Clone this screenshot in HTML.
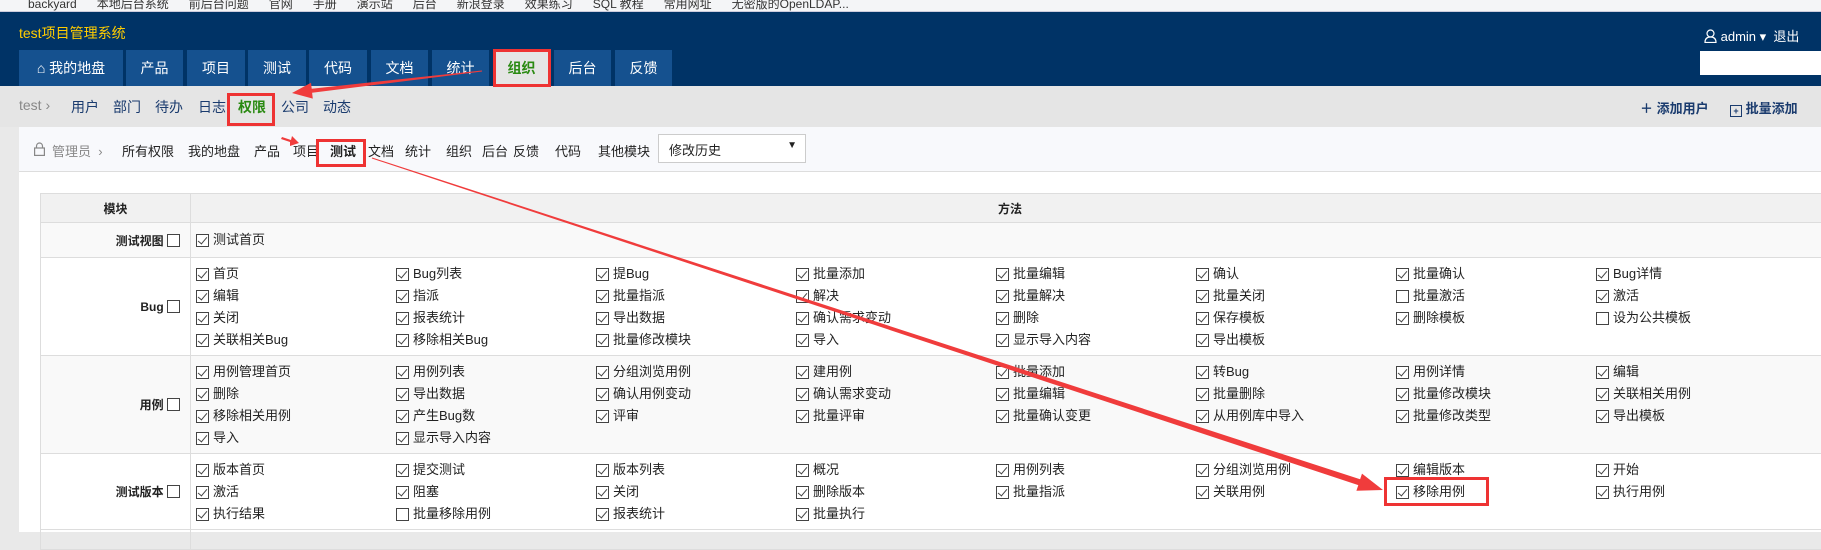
<!DOCTYPE html>
<html><head><meta charset="utf-8"><style>
*{box-sizing:border-box;margin:0;padding:0}
body{width:1821px;height:532px;overflow:hidden;background:#e9e9e9;font-family:"Liberation Sans","Noto Sans CJK SC",sans-serif;font-size:13px;color:#222;position:relative}
.abs{position:absolute;white-space:nowrap}
#bm{position:absolute;left:0;top:0;width:1821px;height:12px;background:#f4f5f7;border-bottom:1px solid #ccd;overflow:hidden}
#hd{position:absolute;left:0;top:12px;width:1821px;height:74px;background:#003366}
.tab{position:absolute;top:38px;height:36px;background:#15518f;color:#fff;font-size:14px;line-height:36px;text-align:center}
#sub{position:absolute;left:0;top:86px;width:1821px;height:41px;background:#e5e5e5}
#panel{position:absolute;left:19px;top:127px;width:1802px;height:405px;background:#fff}
#nav2{position:absolute;left:0;top:0;width:100%;height:45px;background:#f8f9fc;border-bottom:1px solid #ddd}
table{position:absolute;left:21px;top:66px;border-collapse:collapse;width:1790px}
td,th{border:1px solid #ddd;vertical-align:middle}
th{background:#f1f1f1;height:29px;font-size:12px}
td.m{width:150px;text-align:right;font-weight:bold;font-size:12px;padding-right:6px}
td.i{padding:5px 0 4px 5px}
.row{display:flex;flex-wrap:wrap}
.it{width:200px;height:22px;line-height:22px;font-size:13px;display:flex;align-items:center}
.cb{display:inline-block;width:13px;height:13px;border:1px solid #444;margin-right:4px;position:relative;flex:none;background:#fff}
.cb.k::after{content:"";position:absolute;left:3px;top:0px;width:4px;height:8px;border:solid #444;border-width:0 1.5px 1.5px 0;transform:rotate(40deg)}
.g{background:#f9f9f9}
.rb{position:absolute;border:3px solid #ee3333}
</style></head><body>
<div id="bm"><span class="abs" style="left:28px;top:-5px;font-size:12px;color:#333">backyard &nbsp;&nbsp;&nbsp;&nbsp; 本地后台系统 &nbsp;&nbsp;&nbsp;&nbsp; 前后台问题 &nbsp;&nbsp;&nbsp;&nbsp; 官网 &nbsp;&nbsp;&nbsp;&nbsp; 手册 &nbsp;&nbsp;&nbsp;&nbsp; 演示站 &nbsp;&nbsp;&nbsp;&nbsp; 后台 &nbsp;&nbsp;&nbsp;&nbsp; 新浪登录 &nbsp;&nbsp;&nbsp;&nbsp; 效果练习 &nbsp;&nbsp;&nbsp;&nbsp; SQL 教程 &nbsp;&nbsp;&nbsp;&nbsp; 常用网址 &nbsp;&nbsp;&nbsp;&nbsp; 无密版的OpenLDAP...</span></div>
<div id="hd">
<span class="abs" style="left:19px;top:11px;color:#ffcc00;font-size:14px">test项目管理系统</span>
<div class="tab" style="left:19px;width:104px">⌂ 我的地盘</div>
<div class="tab" style="left:126px;width:57px">产品</div>
<div class="tab" style="left:187px;width:58px">项目</div>
<div class="tab" style="left:248px;width:58px">测试</div>
<div class="tab" style="left:309px;width:58px">代码</div>
<div class="tab" style="left:371px;width:57px">文档</div>
<div class="tab" style="left:432px;width:57px">统计</div>
<div class="tab" style="left:493px;width:57px;background:#e5e5e5;color:#2a8a12;font-weight:bold">组织</div>
<div class="tab" style="left:554px;width:57px">后台</div>
<div class="tab" style="left:615px;width:57px">反馈</div>
<span class="abs" style="left:1704px;top:14px;color:#fff;font-size:13px">
<svg width="13" height="14" viewBox="0 0 13 14" style="vertical-align:-2px"><circle cx="6.5" cy="4.5" r="3.5" fill="none" stroke="#fff" stroke-width="1.2"/><path d="M1 13.5 Q1 8 6.5 8 Q12 8 12 13.5 Z" fill="none" stroke="#fff" stroke-width="1.2"/></svg> admin ▾ &nbsp;退出</span>
<div class="abs" style="left:1700px;top:39px;width:121px;height:24px;background:#fff"></div>
</div>
<div id="sub">
<span class="abs" style="left:19px;top:11px;color:#888;font-size:14px">test ›</span>
<span class="abs" style="left:71px;top:11px;color:#1a3b6e;font-size:14px">用户</span>
<span class="abs" style="left:113px;top:11px;color:#1a3b6e;font-size:14px">部门</span>
<span class="abs" style="left:155px;top:11px;color:#1a3b6e;font-size:14px">待办</span>
<span class="abs" style="left:198px;top:11px;color:#1a3b6e;font-size:14px">日志</span>
<span class="abs" style="left:238px;top:11px;color:#2a8a12;font-size:14px;font-weight:bold">权限</span>
<span class="abs" style="left:281px;top:11px;color:#1a3b6e;font-size:14px">公司</span>
<span class="abs" style="left:323px;top:11px;color:#1a3b6e;font-size:14px">动态</span>
<span class="abs" style="left:1640px;top:12px;color:#1a3b6e;font-size:13px;font-weight:bold">＋ 添加用户</span>
<span class="abs" style="left:1730px;top:12px;color:#1a3b6e;font-size:13px;font-weight:bold"><span style="display:inline-block;width:12px;height:12px;border:1px solid #1a3b6e;font-size:9px;line-height:10px;text-align:center;vertical-align:-1px">+</span> 批量添加</span>
</div>
<div id="panel">
<div id="nav2">
<svg class="abs" style="left:15px;top:15px" width="11" height="14" viewBox="0 0 11 14"><path d="M2.5 6 V4 a3 3 0 0 1 6 0 V6" fill="none" stroke="#888" stroke-width="1.2"/><rect x="0.6" y="6" width="9.8" height="7.4" fill="none" stroke="#888" stroke-width="1.2"/></svg>
<span class="abs" style="left:33px;top:14px;color:#888;font-size:13px">管理员 &nbsp;›</span>
<span class="abs" style="left:103px;top:14px;color:#222;font-size:13px">所有权限</span>
<span class="abs" style="left:169px;top:14px;font-size:13px">我的地盘</span>
<span class="abs" style="left:235px;top:14px;font-size:13px">产品</span>
<span class="abs" style="left:274px;top:14px;font-size:13px">项目</span>
<span class="abs" style="left:311px;top:14px;font-size:13px;font-weight:bold">测试</span>
<span class="abs" style="left:349px;top:14px;font-size:13px">文档</span>
<span class="abs" style="left:386px;top:14px;font-size:13px">统计</span>
<span class="abs" style="left:427px;top:14px;font-size:13px">组织</span>
<span class="abs" style="left:463px;top:14px;font-size:13px">后台</span>
<span class="abs" style="left:494px;top:14px;font-size:13px">反馈</span>
<span class="abs" style="left:536px;top:14px;font-size:13px">代码</span>
<span class="abs" style="left:579px;top:14px;font-size:13px">其他模块</span>
<div class="abs" style="left:639px;top:7px;width:148px;height:29px;border:1px solid #ccc;background:#fff;padding:5px 10px;font-size:13px">修改历史<span style="position:absolute;right:8px;top:5px;font-size:10px">▼</span></div>
</div>
<table>
<tr><th style="width:150px">模块</th><th>方法</th></tr>
<tr class="g" style="height:35px"><td class="m">测试视图 <span class="cb" style="vertical-align:-2px"></span></td><td class="i" style="padding:0 0 0 5px"><div class="row"><div class="it"><span class="cb k"></span>测试首页</div></div></td></tr>
<tr style="height:97px"><td class="m">Bug <span class="cb" style="vertical-align:-2px"></span></td><td class="i"><div class="row">
<div class="it"><span class="cb k"></span>首页</div><div class="it"><span class="cb k"></span>Bug列表</div><div class="it"><span class="cb k"></span>提Bug</div><div class="it"><span class="cb k"></span>批量添加</div><div class="it"><span class="cb k"></span>批量编辑</div><div class="it"><span class="cb k"></span>确认</div><div class="it"><span class="cb k"></span>批量确认</div><div class="it"><span class="cb k"></span>Bug详情</div>
<div class="it"><span class="cb k"></span>编辑</div><div class="it"><span class="cb k"></span>指派</div><div class="it"><span class="cb k"></span>批量指派</div><div class="it"><span class="cb k"></span>解决</div><div class="it"><span class="cb k"></span>批量解决</div><div class="it"><span class="cb k"></span>批量关闭</div><div class="it"><span class="cb"></span>批量激活</div><div class="it"><span class="cb k"></span>激活</div>
<div class="it"><span class="cb k"></span>关闭</div><div class="it"><span class="cb k"></span>报表统计</div><div class="it"><span class="cb k"></span>导出数据</div><div class="it"><span class="cb k"></span>确认需求变动</div><div class="it"><span class="cb k"></span>删除</div><div class="it"><span class="cb k"></span>保存模板</div><div class="it"><span class="cb k"></span>删除模板</div><div class="it"><span class="cb"></span>设为公共模板</div>
<div class="it"><span class="cb k"></span>关联相关Bug</div><div class="it"><span class="cb k"></span>移除相关Bug</div><div class="it"><span class="cb k"></span>批量修改模块</div><div class="it"><span class="cb k"></span>导入</div><div class="it"><span class="cb k"></span>显示导入内容</div><div class="it"><span class="cb k"></span>导出模板</div>
</div></td></tr>
<tr class="g" style="height:97px"><td class="m">用例 <span class="cb" style="vertical-align:-2px"></span></td><td class="i"><div class="row">
<div class="it"><span class="cb k"></span>用例管理首页</div><div class="it"><span class="cb k"></span>用例列表</div><div class="it"><span class="cb k"></span>分组浏览用例</div><div class="it"><span class="cb k"></span>建用例</div><div class="it"><span class="cb k"></span>批量添加</div><div class="it"><span class="cb k"></span>转Bug</div><div class="it"><span class="cb k"></span>用例详情</div><div class="it"><span class="cb k"></span>编辑</div>
<div class="it"><span class="cb k"></span>删除</div><div class="it"><span class="cb k"></span>导出数据</div><div class="it"><span class="cb k"></span>确认用例变动</div><div class="it"><span class="cb k"></span>确认需求变动</div><div class="it"><span class="cb k"></span>批量编辑</div><div class="it"><span class="cb k"></span>批量删除</div><div class="it"><span class="cb k"></span>批量修改模块</div><div class="it"><span class="cb k"></span>关联相关用例</div>
<div class="it"><span class="cb k"></span>移除相关用例</div><div class="it"><span class="cb k"></span>产生Bug数</div><div class="it"><span class="cb k"></span>评审</div><div class="it"><span class="cb k"></span>批量评审</div><div class="it"><span class="cb k"></span>批量确认变更</div><div class="it"><span class="cb k"></span>从用例库中导入</div><div class="it"><span class="cb k"></span>批量修改类型</div><div class="it"><span class="cb k"></span>导出模板</div>
<div class="it"><span class="cb k"></span>导入</div><div class="it"><span class="cb k"></span>显示导入内容</div>
</div></td></tr>
<tr style="height:75px"><td class="m">测试版本 <span class="cb" style="vertical-align:-2px"></span></td><td class="i"><div class="row">
<div class="it"><span class="cb k"></span>版本首页</div><div class="it"><span class="cb k"></span>提交测试</div><div class="it"><span class="cb k"></span>版本列表</div><div class="it"><span class="cb k"></span>概况</div><div class="it"><span class="cb k"></span>用例列表</div><div class="it"><span class="cb k"></span>分组浏览用例</div><div class="it"><span class="cb k"></span>编辑版本</div><div class="it"><span class="cb k"></span>开始</div>
<div class="it"><span class="cb k"></span>激活</div><div class="it"><span class="cb k"></span>阻塞</div><div class="it"><span class="cb k"></span>关闭</div><div class="it"><span class="cb k"></span>删除版本</div><div class="it"><span class="cb k"></span>批量指派</div><div class="it"><span class="cb k"></span>关联用例</div><div class="it"><span class="cb k"></span>移除用例</div><div class="it"><span class="cb k"></span>执行用例</div>
<div class="it"><span class="cb k"></span>执行结果</div><div class="it"><span class="cb"></span>批量移除用例</div><div class="it"><span class="cb k"></span>报表统计</div><div class="it"><span class="cb k"></span>批量执行</div>
</div></td></tr>
<tr style="height:20px"><td></td><td></td></tr>
</table>
</div>
<div class="rb" style="left:493px;top:49px;width:58px;height:38px"></div>
<div class="rb" style="left:227px;top:93px;width:48px;height:33px"></div>
<div class="rb" style="left:316px;top:139px;width:50px;height:28px"></div>
<div class="rb" style="left:1384px;top:477px;width:105px;height:29px"></div>
<svg class="abs" style="left:0;top:0" width="1821" height="532">
<polygon fill="#f03c3c" points="481.9,70.5 311.7,88.7 311,82.8 292,93 312.8,98.6 312.1,92.7 482.1,71.5"/>
<polygon fill="#f03c3c" points="282,137 291,140 292,136 299,143 290,146 290,142 281,139"/>
<polygon fill="#f03c3c" points="371.8,158.5 1358.3,485.1 1356.4,490.8 1383,490 1362,473.6 1360.1,479.3 372.2,157.5"/>
</svg>
</body></html>
